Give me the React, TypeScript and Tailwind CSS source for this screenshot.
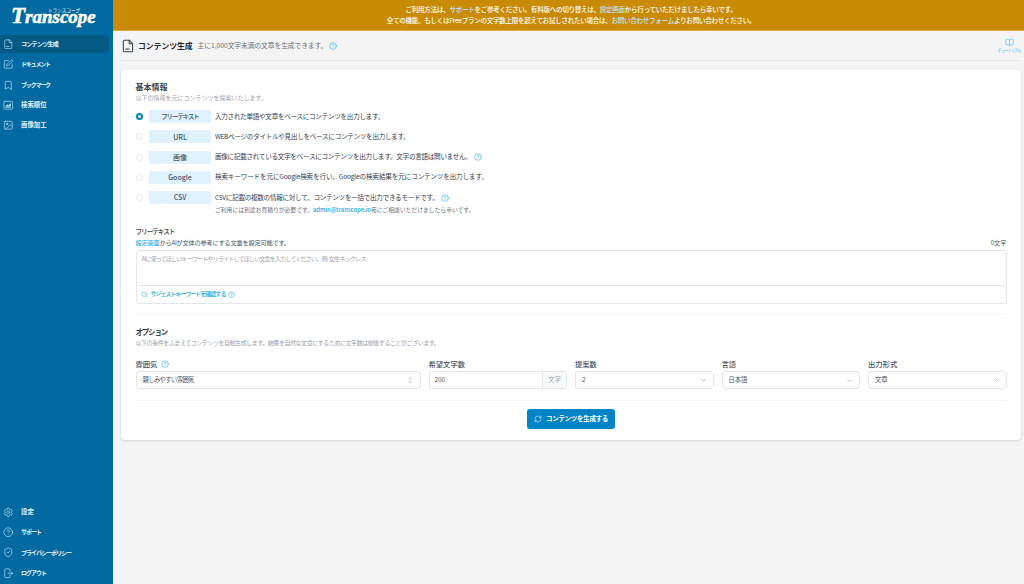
import React from "react";
import {
  BookOpen,
  Bookmark,
  ChevronDown,
  ChevronsUpDown,
  CircleHelp,
  Image as ImageIcon,
  RefreshCw,
  Search,
  Settings,
  ShieldCheck,
  SquarePen,
} from "lucide-react";

const font = { fontFamily: '"Noto Sans CJK JP", "Noto Sans", sans-serif' };

type IconProps = { className?: string; strokeWidth?: number };

// ファイル + 下の短い線
function DocIcon({ className, strokeWidth = 1.5 }: IconProps) {
  return (
    <svg viewBox="0 0 24 24" fill="none" stroke="currentColor" strokeWidth={strokeWidth} strokeLinejoin="round" strokeLinecap="round" className={className}>
      <path d="M14 2H6a2 2 0 0 0-2 2v16a2 2 0 0 0 2 2h12a2 2 0 0 0 2-2V8z" />
      <path d="M14 2v6h6" />
      <path d="M8 17h6" />
    </svg>
  );
}

function RankIcon({ className, strokeWidth = 1.5 }: IconProps) {
  return (
    <svg viewBox="0 0 24 24" fill="none" stroke="currentColor" strokeWidth={strokeWidth} strokeLinejoin="round" strokeLinecap="round" className={className}>
      <rect x="2" y="3" width="20" height="18" rx="2" />
      <path d="M6 17h12" />
      <path d="M7 14l4-3 2 2 4-5v6H7z" fill="currentColor" />
    </svg>
  );
}

function DoorIcon({ className, strokeWidth = 1.5 }: IconProps) {
  return (
    <svg viewBox="0 0 24 24" fill="none" stroke="currentColor" strokeWidth={strokeWidth} strokeLinejoin="round" strokeLinecap="round" className={className}>
      <path d="M16 8V4a2 2 0 0 0-2-2H6a2 2 0 0 0-2 2v16a2 2 0 0 0 2 2h8a2 2 0 0 0 2-2v-4" />
      <path d="M12 12h10" />
      <path d="M19 9l3 3-3 3" />
    </svg>
  );
}

const navTop = [
  { label: "コンテンツ生成", icon: DocIcon, active: true, type: "text-[6px] tracking-[-0.7px]" },
  { label: "ドキュメント", icon: SquarePen, type: "text-[6px] tracking-[-1.2px]" },
  { label: "ブックマーク", icon: Bookmark, type: "text-[6px] tracking-[-1.2px]" },
  { label: "検索順位", icon: RankIcon, type: "text-[6.4px]" },
  { label: "画像加工", icon: ImageIcon, type: "text-[6.4px]" },
];

const navBottom = [
  { label: "設定", icon: Settings, type: "text-[6.4px]" },
  { label: "サポート", icon: CircleHelp, type: "text-[6px] tracking-[-1px]" },
  { label: "プライバシーポリシー", icon: ShieldCheck, type: "text-[6px] tracking-[-1px]" },
  { label: "ログアウト", icon: DoorIcon, type: "text-[6px] tracking-[-1px]" },
];

const modes = [
  { tag: "フリーテキスト", tagType: "text-[6.4px] tracking-[-1px]", track: "tracking-[-0.3px]", text: "入力された単語や文章をベースにコンテンツを出力します。", checked: true },
  { tag: "URL", tagType: "text-[7px]", track: "tracking-[-0.3px]", text: "WEBページのタイトルや見出しをベースにコンテンツを出力します。" },
  { tag: "画像", tagType: "text-[7px]", track: "tracking-[-0.3px]", text: "画像に記載されている文字をベースにコンテンツを出力します。文字の言語は問いません。", help: true },
  { tag: "Google", tagType: "text-[7px]", track: "tracking-[-0.16px]", text: "検索キーワードを元にGoogle検索を行い、Googleの検索結果を元にコンテンツを出力します。" },
  { tag: "CSV", tagType: "text-[7px]", track: "tracking-[-0.3px]", text: "CSVに記載の複数の情報に対して、コンテンツを一括で出力できるモードです。", help: true },
];

function NavItem({ item }: { item: { label: string; icon: React.ElementType; active?: boolean; type: string } }) {
  const Icon = item.icon;
  return (
    <div className={`flex h-[18px] w-[109px] items-center gap-[7.5px] rounded-r pl-[3px] ${item.active ? "bg-[#075985]" : ""}`}>
      <Icon className="h-[10.5px] w-[10.5px] text-[#bae6fd]" strokeWidth={1.5} />
      <span className={`leading-none font-bold text-[#e0f2fe] ${item.type}`}>{item.label}</span>
    </div>
  );
}

function Help({ size = "h-[8px] w-[8px]" }: { size?: string }) {
  return <CircleHelp className={`${size} shrink-0 text-[#0ea5e9]`} strokeWidth={1.5} />;
}

function SelectBox({ label, value, help, updown, tight }: { label: string; value: string; help?: boolean; updown?: boolean; tight?: boolean }) {
  const Chevron = updown ? ChevronsUpDown : ChevronDown;
  return (
    <div>
      <div className="mb-[2px] flex h-[10px] items-center gap-[4px] text-[7.3px] font-medium text-[#4b5563]">
        {label}
        {help && <Help />}
      </div>
      <div className="flex h-[18px] items-center justify-between rounded-[3px] border border-[#e5e7eb] bg-white px-[6px] text-[6.3px] text-[#4b5563]">
        <span className={tight ? "tracking-[-0.6px]" : ""}>{value}</span>
        <Chevron className="h-[7px] w-[7px] text-[#6b7280]" strokeWidth={1.5} />
      </div>
    </div>
  );
}

export default function App() {
  return (
    <div className="flex h-[584px] w-[1024px] overflow-hidden bg-[#f4f4f4] [font-feature-settings:'pkna']" style={font}>
      {/* サイドバー */}
      <aside className="flex w-[113px] shrink-0 flex-col justify-between bg-[#0369a1] pb-[2px]">
        <div>
          <div className="relative flex h-[35px] items-start pl-[11px]">
            <span className="absolute top-[8px] left-[48px] text-[4.6px] leading-none text-white">トランスコープ</span>
            <span
              className="mt-[4px] leading-none font-bold text-white italic [-webkit-text-stroke:0.5px_white]"
              style={{ fontFamily: '"Liberation Serif", serif' }}
            >
              <span className="text-[23px]">T</span>
              <span className="text-[19px]">ranscope</span>
            </span>
          </div>
          <div className="flex flex-col gap-[2.4px]">
            {navTop.map((n) => (
              <NavItem key={n.label} item={n} />
            ))}
          </div>
        </div>
        <div className="flex flex-col gap-[2.4px]">
          {navBottom.map((n) => (
            <NavItem key={n.label} item={n} />
          ))}
        </div>
      </aside>

      <div className="flex min-w-0 flex-1 flex-col">
        {/* お知らせ */}
        <div className="flex h-[31px] shrink-0 flex-col items-center justify-center border-b border-[#e5ab3a] bg-[#c98a04] pl-[5px] text-[6.6px] leading-[11.5px] font-medium tracking-[-0.33px] text-white">
          <p>
            ご利用方法は、<span className="text-[#bae6fd]">サポート</span>をご参考ください。有料版への切り替えは、
            <span className="text-[#bae6fd]">設定画面</span>から行っていただけましたら幸いです。
          </p>
          <p>
            全ての機能、もしくはFreeプランの文字数上限を超えてお試しされたい場合は、
            <span className="text-[#bae6fd]">お問い合わせフォーム</span>よりお問い合わせください。
          </p>
        </div>

        <div className="pr-[3px] pl-[8px]">
          {/* タイトル */}
          <div className="flex h-[30px] items-center justify-between border-b border-[#e5e7eb]">
            <div className="flex items-center">
              <DocIcon className="h-[14px] w-[14px] text-[#374151]" strokeWidth={1.8} />
              <span className="ml-[3px] text-[7.8px] font-bold text-[#1f2937]">コンテンツ生成</span>
              <span className="ml-[5px] text-[6.7px] text-[#6b7280]">主に1,000文字未満の文章を生成できます。</span>
              <span className="ml-[1.5px]"><Help /></span>
            </div>
            <div className="flex flex-col items-center">
              <BookOpen className="h-[9px] w-[9px] text-[#38bdf8]" strokeWidth={1.5} />
              <span className="text-[4.4px] leading-[6px] tracking-[-1px] text-[#38bdf8]">チュートリアル</span>
            </div>
          </div>

          {/* カード */}
          <main className="mt-[9px] h-[370px] rounded-[4px] bg-white px-[14.5px] pt-[11px] shadow-sm">
            <h2 className="text-[8px] leading-[12px] font-bold text-[#374151]">基本情報</h2>
            <p className="text-[6px] leading-[9px] text-[#9ca3af]">以下の情報を元にコンテンツを提案いたします。</p>

            <div className="mt-[8px] flex flex-col gap-[7.3px]">
              {modes.map((m) => (
                <div key={m.tag} className="flex h-[13px] items-center">
                  <span
                    className={`h-[7px] w-[7px] shrink-0 rounded-full ${
                      m.checked ? "border-[2px] border-[#0284c7] bg-white" : "border border-[#e5e7eb] bg-white"
                    }`}
                  />
                  <span className={`ml-[6.5px] flex h-[13px] w-[62px] shrink-0 items-center justify-center rounded-[2px] bg-[#e0f2fe] font-medium text-[#475569] ${m.tagType}`}>
                    {m.tag}
                  </span>
                  <span className={`ml-[4px] text-[6.6px] text-[#374151] ${m.track}`}>{m.text}</span>
                  {m.help && <span className="ml-[2px]"><Help /></span>}
                </div>
              ))}
            </div>
            <p className="mt-[1px] ml-[79.5px] text-[5.8px] leading-[9px] text-[#6b7280]">
              ご利用には別途お見積りが必要です。<span className="font-medium text-[#0ea5e9]">admin@transcope.io</span>宛にご相談いただけましたら幸いです。
            </p>

            <h3 className="mt-[12px] text-[6.6px] leading-[10px] font-medium tracking-[-1px] text-[#374151]">フリーテキスト</h3>
            <div className="mt-[2px] flex items-center justify-between text-[6.2px] leading-[10px] text-[#4b5563]">
              <p className="tracking-[-0.2px]">
                <span className="text-[#0ea5e9]">設定画面</span>からAIが文体の参考にする文章を設定可能です。
              </p>
              <span>0文字</span>
            </div>
            <div className="mt-[2px] rounded-[3px] border border-[#e5e7eb]">
              <div className="h-[35px] rounded-b-[3px] border-b border-[#e5e7eb] px-[5px] pt-[3px] text-[5.8px] leading-[10px] tracking-[-0.6px] text-[#9ca3af]">
                AIに使ってほしいキーワードやリライトしてほしい文章を入力してください。例) 女性 ネックレス
              </div>
              <div className="flex h-[17px] items-center gap-[3px] px-[4px] pb-[1px] text-[5.8px] font-medium text-[#0ea5e9]">
                <Search className="h-[7px] w-[7px]" strokeWidth={1.5} />
                <span className="tracking-[-0.8px]">サジェストキーワードを確認する</span>
                <Help size="h-[7px] w-[7px]" />
              </div>
            </div>

            <div className="mt-[10px] border-t border-[#f3f4f6]" />

            <h3 className="mt-[10px] text-[7.5px] leading-[13px] font-bold tracking-[-1.2px] text-[#374151]">オプション</h3>
            <p className="text-[6px] leading-[9px] tracking-[-0.45px] text-[#9ca3af]">
              以下の条件をふまえてコンテンツを自動生成します。結果を自然な文章にするために文字数は前後することがございます。
            </p>

            <div className="mt-[12px] grid grid-cols-[285px_repeat(4,1fr)] gap-[8px]">
              <SelectBox label="雰囲気" value="親しみやすい雰囲気" help updown tight />
              <div>
                <div className="mb-[2px] h-[10px] text-[7.3px] leading-[10px] font-medium text-[#4b5563]">希望文字数</div>
                <div className="flex h-[18px] items-center rounded-[3px] border border-[#e5e7eb] text-[6.3px] text-[#4b5563]">
                  <span className="flex-1 pl-[5px]">200</span>
                  <span className="flex h-full w-[24px] items-center justify-center border-l border-[#e5e7eb] bg-[#f9fafb] text-[#9ca3af]">文字</span>
                </div>
              </div>
              <SelectBox label="提案数" value="2" />
              <SelectBox label="言語" value="日本語" />
              <SelectBox label="出力形式" value="文章" />
            </div>

            <div className="mt-[11px] border-t border-[#f3f4f6]" />

            <div className="mt-[8px] flex justify-center">
              <button className="flex h-[20px] w-[88px] items-center justify-center gap-[4px] rounded-[3px] bg-[#0284c7] text-[6.5px] font-bold tracking-[-0.3px] text-white">
                <RefreshCw className="h-[8px] w-[8px]" strokeWidth={1.5} />
                コンテンツを生成する
              </button>
            </div>
          </main>
        </div>
      </div>
    </div>
  );
}
